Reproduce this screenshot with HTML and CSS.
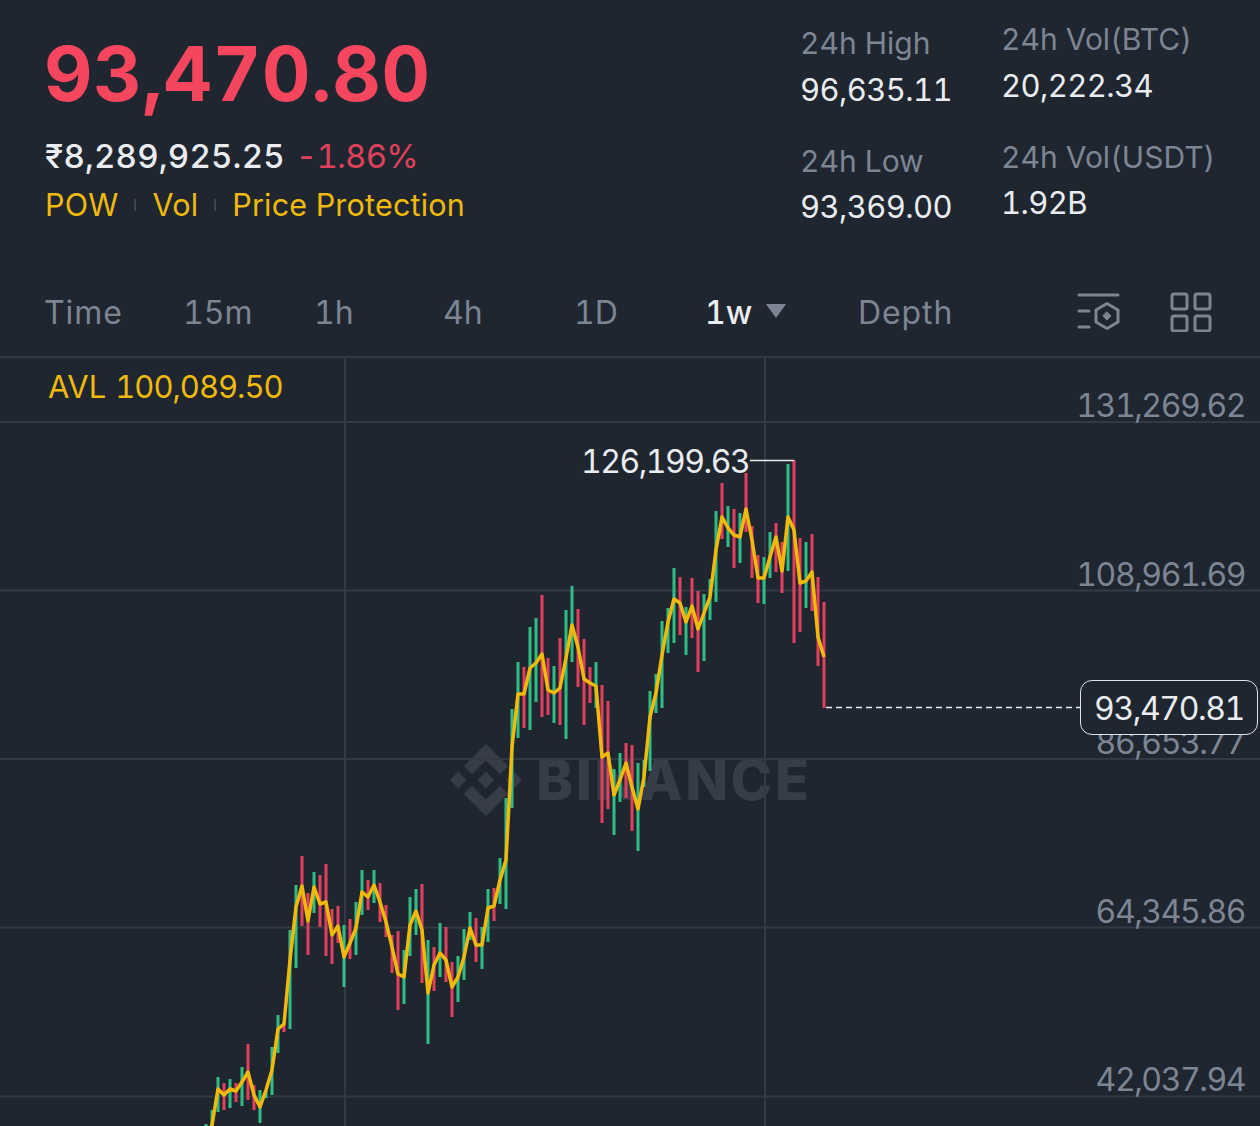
FILE: index.html
```html
<!DOCTYPE html>
<html lang="en">
<head>
    <meta charset="UTF-8">
    <meta name="viewport" content="width=device-width, initial-scale=1.0">
    <title>BTC Chart</title>
    <link rel="stylesheet" href="styles.css">
</head>
<body>
    <header class="ticker">
        <div class="price-block">
            <div class="last-price">93,470.80</div>
            <div class="sub-price">
                <span class="fiat">₹8,289,925.25</span>
                <span class="change">-1.86%</span>
            </div>
            <div class="tags">
                <span>POW</span>
                <i class="tag-sep"></i>
                <span>Vol</span>
                <i class="tag-sep"></i>
                <span>Price Protection</span>
            </div>
        </div>
        <div class="stats">
            <div class="stat-col stat-col-left">
                <div class="stat">
                    <div class="stat-label">24h High</div>
                    <div class="stat-value">96,635.11</div>
                </div>
                <div class="stat">
                    <div class="stat-label">24h Low</div>
                    <div class="stat-value">93,369.00</div>
                </div>
            </div>
            <div class="stat-col">
                <div class="stat">
                    <div class="stat-label">24h Vol(BTC)</div>
                    <div class="stat-value">20,222.34</div>
                </div>
                <div class="stat">
                    <div class="stat-label">24h Vol(USDT)</div>
                    <div class="stat-value">1.92B</div>
                </div>
            </div>
        </div>
    </header>

    <nav class="tabs">
        <span class="tab tab-word">Time</span>
        <span class="tab">15m</span>
        <span class="tab">1h</span>
        <span class="tab">4h</span>
        <span class="tab">1D</span>
        <span class="tab tab-active">1w <i class="caret"></i></span>
        <span class="tab tab-word">Depth</span>
        <div class="tools">
            <svg width="44" height="40" viewBox="0 0 44 40" fill="none" stroke="#7d8592" stroke-width="3" stroke-linecap="round" stroke-linejoin="round">
                <path d="M2 3H41M2 19H12M2 35H12"/>
                <path d="M30 11.5L41 18V30L30 36.500L19 30V18Z"/>
                <path d="M30 20L34 24L30 28L26 24Z" fill="#7d8592" stroke-width="1"/>
            </svg>
            <svg width="42" height="40" viewBox="0 0 42 40" fill="none" stroke="#7d8592" stroke-width="3">
                <rect x="2" y="2" width="15" height="15" rx="2"/>
                <rect x="25" y="2" width="15" height="15" rx="2"/>
                <rect x="2" y="24" width="15" height="15" rx="2"/>
                <rect x="25" y="24" width="15" height="15" rx="2"/>
            </svg>
        </div>
    </nav>

    <main class="chart">
        <div class="watermark">
            <svg width="72" height="72" viewBox="0 0 126.61 126.61" fill="#363d48">
                <path d="M38.73 53.2l24.59-24.58 24.6 24.6 14.3-14.31L63.32 0 24.43 38.9zM0 63.31l14.3-14.31 14.31 14.31-14.31 14.3zM38.73 73.41l24.59 24.59 24.6-24.6 14.31 14.29-38.9 38.91-38.91-38.88-.02-.02zM98.01 63.31l14.3-14.31 14.3 14.3-14.31 14.31zM77.83 63.3L63.32 48.78 52.59 59.51l-1.24 1.23-2.54 2.54 14.51 14.5 14.51-14.47z"/>
            </svg>
            <span class="watermark-text">BINANCE</span>
        </div>

        <svg class="plot" width="1260" height="768" viewBox="0 358 1260 768" fill="none">
            <path class="grid" d="M0 422H1260M0 590.500H1260M0 759H1260M0 927.500H1260M0 1096.500H1260M345 358V1126M765 358V1126"/>
            <path class="bars-up" d="M206 1124V1130M212 1110V1130M218 1077V1112M230 1079V1108M242 1067V1106M260 1090V1123M266 1090V1098M272 1047V1095M278 1015V1053M290 930V1029M296 885V968M314 872V913M344 925V987M356 902V955M362 870V915M374 870V903M404 950V1004M410 897V956M416 889V935M428 940V1044M440 923V977M458 956V1002M464 929V980M470 912V940M482 927V969M488 889V942M500 858V904M506 798V909M512 709V808M518 662V738M530 627V730M536 618V702M554 666V723M566 610V739M572 586V662M596 662V708M614 769V835M620 753V802M638 763V851M644 760V787M650 691V771M656 674V713M662 621V708M668 608V653M674 568V643M686 607V655M704 594V661M710 579V620M716 511V602M728 506V547M740 513V563M764 557V604M770 532V578M788 464V571M806 542V608"/>
            <path class="bars-down" d="M224 1083V1110M236 1083V1102M248 1044V1100M254 1085V1110M284 1023V1032M302 856V926M308 893V955M320 875V927M326 864V956M332 909V964M338 906V943M350 919V959M368 880V910M380 883V922M386 905V937M392 935V973M398 931V1010M422 884V983M434 947V991M446 927V982M452 962V1017M476 918V962M494 888V921M524 667V728M542 595V717M548 658V715M560 638V725M578 609V687M584 639V725M590 667V703M602 685V823M608 701V809M626 743V798M632 745V831M680 577V635M692 578V638M698 591V672M722 483V539M734 509V568M746 473V532M752 526V578M758 555V603M776 523V572M782 542V593M794 460V643M800 538V632M812 534V611M818 577V666M824 602V708"/>
            <polyline class="avl-line" points="209,1130 212,1125 218,1089 224,1095 230,1089 236,1091 242,1082 248,1072 254,1095 260,1107 266,1090 272,1070 278,1029 284,1024 290,960 296,907 302,886 308,921 314,887 320,904 326,902 332,935 338,926 344,957 350,943 356,928 362,892 368,897 374,885 380,902 386,922 392,947 398,974 404,977 410,925 416,911 422,930 428,993 434,965 440,953 446,960 452,987 458,977 464,957 470,928 476,945 482,945 488,908 494,906 500,880 506,860 512,747 518,694 524,694 530,668 536,663 542,654 548,690 554,693 560,688 566,658 572,625 578,647 584,679 590,683 596,686 602,757 608,753 614,795 620,780 626,763 632,787 638,809 644,777 650,717 656,693 662,655 668,622 674,599 680,603 686,622 692,606 698,629 704,613 710,597 716,550 722,517 728,528 734,535 740,537 746,509 752,540 758,578 764,578 770,557 776,537 782,571 788,517 794,530 800,583 806,581 812,572 818,637 824,657"/>
            <path class="high-line" d="M750 460.500H794"/>
            <path class="last-line" d="M826 707.500H1080"/>
        </svg>

        <div class="avl">
            <span>AVL</span>
            <span class="avl-value">100,089.50</span>
        </div>
        <div class="high-label">126,199.63</div>

        <div class="axis">
            <div class="axis-label">131,269.62</div>
            <div class="axis-label">108,961.69</div>
            <div class="axis-label">86,653.77</div>
            <div class="axis-label">64,345.86</div>
            <div class="axis-label">42,037.94</div>
        </div>
        <div class="price-tag">93,470.81</div>
    </main>
</body>
</html>
```

FILE: styles.css
```css
* {
    box-sizing: border-box;
}
body {
    margin: 0;
    height: 1126px;
    overflow: hidden;
    font-family: Inter, "Noto Sans", sans-serif;
    font-variant-numeric: tabular-nums;
    background-color: #1f2630;
    color: #eaecef;
}
.ticker {
    display: flex;
    justify-content: space-between;
    height: 270px;
    padding: 0 47px 0 44px;
}
.last-price {
    margin-top: 29px;
    font-size: 75px;
    line-height: 90px;
    font-weight: 700;
    letter-spacing: 0.8px;
    color: #f6465d;
}
.sub-price {
    display: flex;
    gap: 11px;
    margin-top: 15px;
    padding-left: 1px;
    font-size: 33px;
    line-height: 44px;
}
.fiat {
    font-weight: 500;
    letter-spacing: 0.2px;
}
.change {
    letter-spacing: -0.8px;
    color: #e0405a;
}
.tags {
    display: flex;
    align-items: center;
    gap: 16px;
    margin-top: 7px;
    padding-left: 1px;
    font-size: 30.500px;
    line-height: 40px;
    letter-spacing: 0.2px;
    color: #f0b90b;
}
.tag-sep {
    width: 2px;
    height: 12px;
    background: #3a424d;
}
.stats {
    display: flex;
    gap: 50px;
    width: 413px;
}
.stat-col {
    padding-top: 19px;
    width: 212px;
}
.stat-col-left {
    width: 151px;
    padding-top: 23px;
}
.stat {
    height: 117.500px;
}
.stat-label {
    font-size: 30px;
    line-height: 40px;
    color: #7d8592;
    white-space: nowrap;
}
.stat-value {
    margin-top: 6.500px;
    font-size: 31px;
    line-height: 40px;
    letter-spacing: -0.6px;
    white-space: nowrap;
}
.tabs {
    display: grid;
    grid-template-columns: 139px 131px 129px 131px 131px 153px auto 1fr;
    align-items: center;
    height: 88px;
    padding-left: 44px;
    border-bottom: 2px solid #2f3742;
}
.tab {
    font-size: 32px;
    line-height: 44px;
    color: #7d8592;
}
.tab-word {
    letter-spacing: 0.9px;
}
.tab-active {
    display: flex;
    align-items: center;
    gap: 14px;
    color: #eaecef;
    font-weight: 500;
}
.caret {
    width: 0;
    height: 0;
    margin-bottom: 4px;
    border-left: 10px solid transparent;
    border-right: 10px solid transparent;
    border-top: 14px solid #7d8592;
}
.tools {
    display: flex;
    justify-content: flex-end;
    align-items: center;
    gap: 49px;
    margin-bottom: 3px;
    padding-right: 48px;
}
.chart {
    position: relative;
    height: 768px;
    overflow: hidden;
}
.plot {
    position: absolute;
    left: 0;
    top: 0;
}
.grid {
    stroke: #323a45;
    stroke-width: 2;
}
.bars-up {
    stroke: #2ebd85;
    stroke-width: 3;
}
.bars-down {
    stroke: #e2405c;
    stroke-width: 3;
}
.avl-line {
    stroke: #f0b90b;
    stroke-width: 3.500;
    stroke-linejoin: round;
}
.high-line {
    stroke: #eaecef;
    stroke-width: 1.5;
}
.last-line {
    stroke: #eaecef;
    stroke-width: 1.5;
    stroke-dasharray: 6 4;
}
.watermark {
    position: absolute;
    left: 450px;
    top: 386px;
    display: flex;
    align-items: center;
    gap: 14px;
}
.watermark-text {
    font-size: 56px;
    line-height: 72px;
    font-weight: 800;
    letter-spacing: 2.500px;
    color: #363d48;
}
.avl {
    position: absolute;
    left: 48px;
    top: 9px;
    display: flex;
    gap: 9px;
    font-size: 31px;
    line-height: 40px;
    color: #f0b90b;
}
.avl-value {
    letter-spacing: -1px;
}
.high-label {
    position: absolute;
    left: 581px;
    top: 83px;
    font-size: 32px;
    line-height: 42px;
    letter-spacing: -1.5px;
}
.axis {
    position: absolute;
    right: 15px;
    top: 28px;
    text-align: right;
}
.axis-label {
    height: 168.500px;
    font-size: 32px;
    line-height: 40px;
    letter-spacing: -1.450px;
    color: #7d8592;
}
.price-tag {
    position: absolute;
    left: 1080px;
    top: 322px;
    width: 178px;
    height: 55px;
    border: 1.500px solid #dfe2e7;
    border-radius: 12px;
    background: #1f2630;
    font-size: 32px;
    line-height: 55px;
    letter-spacing: -1.4px;
    text-align: center;
}
```
